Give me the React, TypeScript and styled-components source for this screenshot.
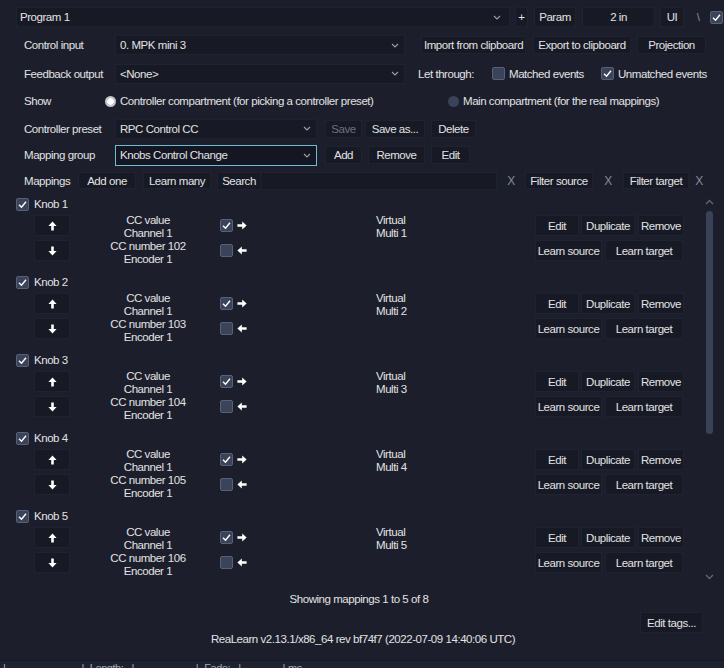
import React from "react";
import styled, { createGlobalStyle } from "styled-components";

const GlobalStyle = createGlobalStyle`
  html, body { margin: 0; padding: 0; background: #1c1f2b; }
  body {
    font-family: "Liberation Sans", Arial, sans-serif;
    font-size: 11.5px;
    letter-spacing: -0.45px;
    color: #e2e2e4;
  }
  * { box-sizing: border-box; }
`;

const Page = styled.div`
  width: 724px;
  height: 668px;
  background: #1c1f2b;
  overflow: hidden;
  display: flex;
  flex-direction: column;
`;

const TopBar = styled.div`
  display: flex;
  align-items: center;
  padding: 7px 0 0 16px;
  height: 27px;
  flex: none;
`;

const Row = styled.div<{ $h: number; $pl?: number }>`
  display: flex;
  align-items: center;
  height: ${(p) => p.$h}px;
  padding-left: ${(p) => p.$pl ?? 24}px;
  flex: none;
  white-space: nowrap;
`;

const Label = styled.div<{ $w: number }>`
  width: ${(p) => p.$w}px;
  flex: none;
`;

const Btn = styled.div<{ $w: number; $h?: number; $ml?: number; $disabled?: boolean }>`
  width: ${(p) => p.$w}px;
  height: ${(p) => p.$h ?? 20}px;
  margin-left: ${(p) => p.$ml ?? 0}px;
  flex: none;
  display: flex;
  align-items: center;
  justify-content: center;
  background: #171a25;
  border: 1px solid #1f2331;
  color: ${(p) => (p.$disabled ? "#6c717e" : "#e2e2e4")};
  white-space: nowrap;
`;

const Select = styled.div<{ $w: number; $ml?: number; $focus?: boolean; $h?: number }>`
  width: ${(p) => p.$w}px;
  height: ${(p) => p.$h ?? 20}px;
  margin-left: ${(p) => p.$ml ?? 0}px;
  flex: none;
  display: flex;
  align-items: center;
  justify-content: space-between;
  padding: 0 5px 0 4px;
  background: ${(p) => (p.$focus ? "#141722" : "#171a25")};
  border: 1px solid ${(p) => (p.$focus ? "#6fbcd2" : "#1f2331")};
`;

const Chevron = styled.svg`
  width: 8px;
  height: 5px;
  flex: none;
`;

const Box = styled.span<{ $on?: boolean }>`
  width: 13px;
  height: 13px;
  flex: none;
  display: inline-flex;
  align-items: center;
  justify-content: center;
  background: #3b4358;
  border: 1px solid #57607a;
  border-radius: 2px;
`;

const Radio = styled.span<{ $on?: boolean }>`
  width: 11px;
  height: 11px;
  flex: none;
  border-radius: 50%;
  background: ${(p) =>
    p.$on ? "radial-gradient(circle, #ffffff 0 3px, #c3c6ce 3.6px)" : "#3b4358"};
`;

const Group = styled.div<{ $w?: number; $ml?: number }>`
  display: flex;
  align-items: center;
  gap: 4px;
  flex: none;
  width: ${(p) => (p.$w ? `${p.$w}px` : "auto")};
  margin-left: ${(p) => p.$ml ?? 0}px;
`;

const Clear = styled.div<{ $w: number }>`
  width: ${(p) => p.$w}px;
  flex: none;
  text-align: center;
  color: #858a96;
  font-size: 12px;
`;

const SearchField = styled.div`
  width: 280px;
  height: 18px;
  margin-left: 6px;
  flex: none;
  display: flex;
  align-items: center;
  background: #171a25;
  border: 1px solid #1f2331;
`;

const SearchLabel = styled.div`
  width: 44px;
  height: 100%;
  display: flex;
  align-items: center;
  justify-content: center;
  border-right: 2px solid #1c1f2b;
`;

const Tiny = styled.div<{ $ml: number }>`
  margin-left: ${(p) => p.$ml}px;
  color: #9aa0ac;
  font-size: 10px;
  width: 10px;
  flex: none;
`;

/* mapping list */

const ListArea = styled.div`
  display: flex;
  height: 390px;
  margin-top: 2px;
  flex: none;
`;

const List = styled.div`
  width: 705px;
  flex: none;
  display: flex;
  flex-direction: column;
`;

const Mapping = styled.div`
  height: 78px;
  display: flex;
  flex-direction: column;
  flex: none;
`;

const MappingHead = styled.div`
  height: 18px;
  display: flex;
  align-items: center;
  padding-left: 16px;
  gap: 5px;
`;

const MappingBody = styled.div`
  display: flex;
  align-items: flex-start;
  padding-left: 34px;
`;

const Stack = styled.div<{ $ml?: number; $w?: number }>`
  display: flex;
  flex-direction: column;
  gap: 4px;
  margin-top: 2px;
  margin-left: ${(p) => p.$ml ?? 0}px;
  width: ${(p) => (p.$w ? `${p.$w}px` : "auto")};
  flex: none;
`;

const ActionRow = styled.div<{ $gap: number }>`
  display: flex;
  gap: ${(p) => p.$gap}px;
`;

const TextCol = styled.div<{ $w: number; $ml: number; $align: string }>`
  width: ${(p) => p.$w}px;
  margin-left: ${(p) => p.$ml}px;
  text-align: ${(p) => p.$align};
  line-height: 13px;
  padding-top: 1px;
  flex: none;
  white-space: nowrap;
`;

const DirRow = styled.div`
  height: 21px;
  display: flex;
  align-items: center;
  gap: 4px;
`;

const ScrollCol = styled.div`
  width: 19px;
  flex: none;
  display: flex;
  flex-direction: column;
  align-items: flex-start;
  padding-left: 1px;
`;

const ScrollArrow = styled.svg<{ $mt: number }>`
  width: 9px;
  height: 6px;
  margin-top: ${(p) => p.$mt}px;
  margin-left: -1px;
  flex: none;
`;

const Thumb = styled.div`
  width: 7px;
  height: 223px;
  margin-top: 6px;
  border-radius: 4px;
  background: #3a4258;
  flex: none;
`;

/* footer */

const Showing = styled.div`
  height: 27px;
  display: flex;
  align-items: center;
  justify-content: center;
  padding-right: 6px;
  flex: none;
`;

const FooterGrid = styled.div`
  display: grid;
  grid-template-columns: 1fr;
  height: 34px;
  flex: none;
`;

const EditTags = styled(Btn)`
  grid-area: 1 / 1;
  justify-self: end;
  align-self: start;
  margin-right: 21px;
`;

const Version = styled.div`
  grid-area: 1 / 1;
  justify-self: center;
  align-self: end;
  line-height: 14px;
  padding-left: 2px;
`;

const Spacer = styled.div`
  flex: 1;
`;

const Strip = styled.div`
  height: 8px;
  flex: none;
  overflow: hidden;
  background: #1e2130;
  border-top: 1px solid #161924;
  display: flex;
  align-items: flex-start;
  color: #a3a7b0;
  font-size: 11px;
  line-height: 14px;
`;

const StripItem = styled.div<{ $x: number }>`
  margin-left: ${(p) => p.$x}px;
  flex: none;
`;

const ChevronDown = () => (
  <Chevron viewBox="0 0 8 5">
    <polyline points="1,1 4,4 7,1" fill="none" stroke="#9aa0ab" strokeWidth="1.1" />
  </Chevron>
);

const CheckBox = ({ on }: { on?: boolean }) => (
  <Box $on={on}>
    {on && (
      <svg width="11" height="11" viewBox="0 0 11 11">
        <polyline points="2,5.8 4.5,8.2 9,2.8" fill="none" stroke="#ffffff" strokeWidth="1.4" />
      </svg>
    )}
  </Box>
);

const ArrowV = ({ up }: { up?: boolean }) => (
  <svg width="9" height="10" viewBox="0 0 9 10" style={{ transform: up ? "none" : "rotate(180deg)" }}>
    <path d="M4.5 0.5 L8.6 5 H5.8 V9.5 H3.2 V5 H0.4 Z" fill="#ffffff" />
  </svg>
);

const ArrowH = ({ right }: { right?: boolean }) => (
  <svg width="10" height="9" viewBox="0 0 10 9" style={{ transform: right ? "none" : "rotate(180deg)" }}>
    <path d="M9.6 4.5 L5.2 0.4 V3.2 H0.4 V5.8 H5.2 V8.6 Z" fill="#ffffff" />
  </svg>
);

const mappings = [1, 2, 3, 4, 5];

export default function App() {
  return (
    <Page>
      <GlobalStyle />
      <TopBar>
        <Select $w={494} style={{ paddingLeft: 3, paddingRight: 8 }}>
          <span>Program 1</span>
          <ChevronDown />
        </Select>
        <Btn $w={13} $ml={5}>+</Btn>
        <Btn $w={42} $ml={6}>Param</Btn>
        <Btn $w={73} $ml={6}>2 in</Btn>
        <Btn $w={24} $ml={5}>UI</Btn>
        <Tiny $ml={13}>\</Tiny>
        <Group $ml={3}>
          <CheckBox on />
        </Group>
      </TopBar>

      <Row $h={33} style={{ paddingTop: 3 }}>
        <Label $w={91}>Control input</Label>
        <Select $w={290}>
          <span>0. MPK mini 3</span>
          <ChevronDown />
        </Select>
        <Btn $w={105} $ml={16} $h={18}>Import from clipboard</Btn>
        <Btn $w={98} $ml={7} $h={18}>Export to clipboard</Btn>
        <Btn $w={69} $ml={6} $h={18}>Projection</Btn>
      </Row>

      <Row $h={27}>
        <Label $w={91}>Feedback output</Label>
        <Select $w={290}>
          <span>&lt;None&gt;</span>
          <ChevronDown />
        </Select>
        <Label $w={74} style={{ marginLeft: 13 }}>Let through:</Label>
        <Group $w={109}>
          <CheckBox />
          <span>Matched events</span>
        </Group>
        <Group>
          <CheckBox on />
          <span>Unmatched events</span>
        </Group>
      </Row>

      <Row $h={28}>
        <Label $w={81}>Show</Label>
        <Group $w={343}>
          <Radio $on />
          <span>Controller compartment (for picking a controller preset)</span>
        </Group>
        <Group>
          <Radio />
          <span>Main compartment (for the real mappings)</span>
        </Group>
      </Row>

      <Row $h={27}>
        <Label $w={91}>Controller preset</Label>
        <Select $w={202}>
          <span>RPC Control CC</span>
          <ChevronDown />
        </Select>
        <Btn $w={37} $ml={8} $h={18} $disabled>Save</Btn>
        <Btn $w={60} $ml={3} $h={18}>Save as...</Btn>
        <Btn $w={45} $ml={6} $h={18}>Delete</Btn>
      </Row>

      <Row $h={26}>
        <Label $w={91}>Mapping group</Label>
        <Select $w={202} $focus $h={21}>
          <span>Knobs Control Change</span>
          <ChevronDown />
        </Select>
        <Btn $w={37} $ml={8} $h={18}>Add</Btn>
        <Btn $w={57} $ml={6} $h={18}>Remove</Btn>
        <Btn $w={39} $ml={6} $h={18}>Edit</Btn>
      </Row>

      <Row $h={25}>
        <Label $w={54}>Mappings</Label>
        <Btn $w={58} $h={17}>Add one</Btn>
        <Btn $w={68} $ml={7} $h={17}>Learn many</Btn>
        <SearchField>
          <SearchLabel>Search</SearchLabel>
        </SearchField>
        <Clear $w={28}>X</Clear>
        <Btn $w={68} $h={17}>Filter source</Btn>
        <Clear $w={30}>X</Clear>
        <Btn $w={66} $h={17}>Filter target</Btn>
        <Clear $w={20}>X</Clear>
      </Row>

      <ListArea>
        <List>
          {mappings.map((n) => (
            <Mapping key={n}>
              <MappingHead>
                <CheckBox on />
                <span>Knob {n}</span>
              </MappingHead>
              <MappingBody>
                <Stack>
                  <Btn $w={36} $h={21}><ArrowV up /></Btn>
                  <Btn $w={36} $h={21}><ArrowV /></Btn>
                </Stack>
                <TextCol $w={140} $ml={8} $align="center">
                  CC value<br />Channel 1<br />CC number {101 + n}<br />Encoder 1
                </TextCol>
                <Stack $ml={2} $w={30}>
                  <DirRow>
                    <CheckBox on />
                    <ArrowH right />
                  </DirRow>
                  <DirRow>
                    <CheckBox />
                    <ArrowH />
                  </DirRow>
                </Stack>
                <TextCol $w={159} $ml={126} $align="left">
                  Virtual<br />Multi {n}
                </TextCol>
                <Stack>
                  <ActionRow $gap={2}>
                    <Btn $w={44} $h={21}>Edit</Btn>
                    <Btn $w={54} $h={21}>Duplicate</Btn>
                    <Btn $w={46} $h={21} style={{ marginLeft: 1 }}>Remove</Btn>
                  </ActionRow>
                  <ActionRow $gap={3}>
                    <Btn $w={67} $h={21}>Learn source</Btn>
                    <Btn $w={78} $h={21}>Learn target</Btn>
                  </ActionRow>
                </Stack>
              </MappingBody>
            </Mapping>
          ))}
        </List>
        <ScrollCol>
          <ScrollArrow $mt={4} viewBox="0 0 9 6">
            <polyline points="1,5 4.5,1.5 8,5" fill="none" stroke="#5c6479" strokeWidth="1.4" />
          </ScrollArrow>
          <Thumb />
          <ScrollArrow $mt={140} viewBox="0 0 9 6">
            <polyline points="1,1 4.5,4.5 8,1" fill="none" stroke="#5c6479" strokeWidth="1.4" />
          </ScrollArrow>
        </ScrollCol>
      </ListArea>

      <Showing>Showing mappings 1 to 5 of 8</Showing>
      <FooterGrid>
        <EditTags $w={63} $h={21}>Edit tags...</EditTags>
        <Version>ReaLearn v2.13.1/x86_64 rev bf74f7 (2022-07-09 14:40:06 UTC)</Version>
      </FooterGrid>
      <Spacer />
      <Strip>
        <StripItem $x={3}>|</StripItem>
        <StripItem $x={76}>|</StripItem>
        <StripItem $x={6}>Length:</StripItem>
        <StripItem $x={8}>|</StripItem>
        <StripItem $x={62}>|</StripItem>
        <StripItem $x={6}>Fade:</StripItem>
        <StripItem $x={8}>|</StripItem>
        <StripItem $x={42}>|</StripItem>
        <StripItem $x={3}>ms</StripItem>
      </Strip>
    </Page>
  );
}
